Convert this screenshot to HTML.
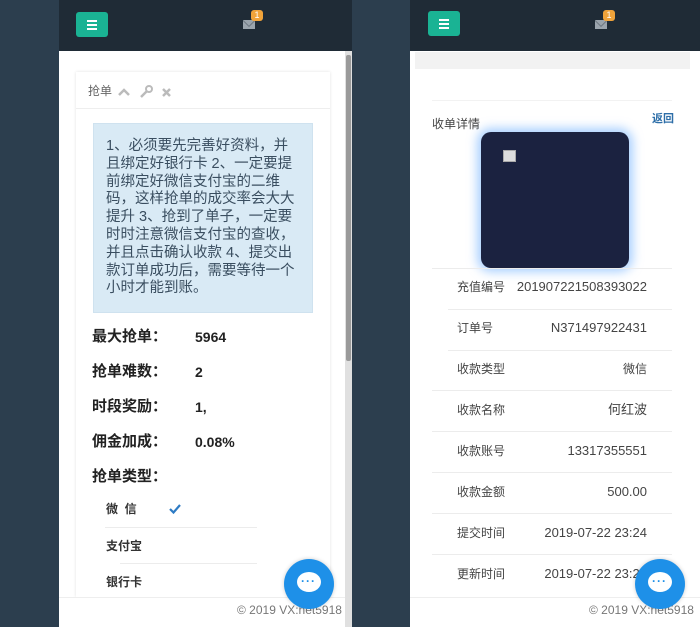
<!DOCTYPE html>
<html><head><meta charset="utf-8">
<style>
*{margin:0;padding:0;box-sizing:border-box}
body{width:700px;height:627px;background:#2c3e4e;position:relative;overflow:hidden;font-family:"Liberation Sans","Noto Sans CJK SC",sans-serif;}
.abs{position:absolute}
.top{background:#1f2b36;height:51px}
.menu{width:32px;height:25px;background:#1ab394;border-radius:3px;top:12px}
.menu i{position:absolute;left:11px;width:10px;height:2px;background:#fff}
.mail{width:12px;height:9px;background:#9aa4ad;top:20px;overflow:hidden}
.mail:after{content:"";position:absolute;left:1px;top:-5px;width:8px;height:8px;border:1px solid #6f7a84;transform:rotate(45deg)}
.badge{width:12px;height:11px;background:#f0a33a;border-radius:3px;color:#fff;font-size:9px;text-align:center;line-height:11px;top:10px}
.chat{width:50px;height:50px;border-radius:50%;background:#1e90e8;box-shadow:0 0 4px rgba(0,0,0,.2)}
.chat b{position:absolute;left:13px;top:13px;width:24px;height:20px;background:#fff;border-radius:50%}
.chat span{position:absolute;left:17px;top:15px;color:#1e90e8;font-size:12px;letter-spacing:1px;font-weight:bold}
.foot{font-size:12px;color:#777}
.lrow{font-size:15px;font-weight:bold;color:#222;line-height:18px}
.opt{font-size:12px;font-weight:bold;color:#333;line-height:16px}
.rl{font-size:12px;color:#444;line-height:16px}
.rv{font-size:13px;color:#444;text-align:right;width:200px;line-height:16px}
.sep{height:1px;background:#ececec}
</style></head><body>
<!-- left panel -->
<div class="abs" style="left:59px;top:0;width:293px;height:627px;background:#f3f3f4"></div>
<div class="abs top" style="left:59px;top:0;width:293px"></div>
<div class="abs menu" style="left:76px"><i style="top:8px"></i><i style="top:12px"></i><i style="top:16px"></i></div>
<div class="abs mail" style="left:243px"></div>
<div class="abs badge" style="left:251px">1</div>
<div class="abs" style="left:59px;top:51px;width:286px;height:546px;background:#fff"></div>
<div class="abs" style="left:345px;top:51px;width:7px;height:576px;background:#e0e0e0"></div>
<div class="abs" style="left:346px;top:55px;width:5px;height:306px;background:#9a9a9a;border-radius:2px"></div>
<div class="abs" style="left:76px;top:72px;width:254px;height:525px;background:#fff;box-shadow:0 0 3px rgba(0,0,0,.12)"></div>
<div class="abs" style="left:76px;top:108px;width:254px;height:1px;background:#eee"></div>
<div class="abs" style="left:88px;top:82px;font-size:12px;color:#666">抢单</div>
<svg class="abs" style="left:117px;top:87px" width="14" height="10"><path d="M2 8 L7 3 L12 8" stroke="#bbb" stroke-width="2.5" fill="none"/></svg>
<svg class="abs" style="left:139px;top:85px" width="14" height="14"><path d="M2 12 L8 6" stroke="#bbb" stroke-width="2.5"/><circle cx="10" cy="4" r="3" fill="none" stroke="#bbb" stroke-width="2"/></svg>
<svg class="abs" style="left:161px;top:87px" width="11" height="11"><path d="M2 2 L9 9 M9 2 L2 9" stroke="#bbb" stroke-width="2.5"/></svg>
<div class="abs" style="left:93px;top:123px;width:220px;height:190px;background:#d9eaf5;border:1px solid #cfe2ef"></div>
<div class="abs" style="left:106px;top:138px;white-space:nowrap;font-size:14.5px;line-height:17.8px;color:#3a4e60">1、必须要先完善好资料，并<br>且绑定好银行卡 2、一定要提<br>前绑定好微信支付宝的二维<br>码，这样抢单的成交率会大大<br>提升 3、抢到了单子，一定要<br>时时注意微信支付宝的查收，<br>并且点击确认收款 4、提交出<br>款订单成功后，需要等待一个<br>小时才能到账。</div>
<div class="abs lrow" style="left:92px;top:328px">最大抢单：</div><div class="abs lrow" style="left:195px;top:328px;font-size:14px">5964</div>
<div class="abs lrow" style="left:92px;top:363px">抢单难数：</div><div class="abs lrow" style="left:195px;top:363px;font-size:14px">2</div>
<div class="abs lrow" style="left:92px;top:398px">时段奖励：</div><div class="abs lrow" style="left:195px;top:398px;font-size:14px">1,</div>
<div class="abs lrow" style="left:92px;top:433px">佣金加成：</div><div class="abs lrow" style="left:195px;top:433px;font-size:14px">0.08%</div>
<div class="abs lrow" style="left:92px;top:468px">抢单类型：</div>
<div class="abs opt" style="left:106px;top:501px">微&nbsp;&nbsp;信</div>
<svg class="abs" style="left:168px;top:503px" width="14" height="12"><path d="M2 6 L5.5 9.5 L12 2" stroke="#2d7bc4" stroke-width="2.2" fill="none"/></svg>
<div class="abs sep" style="left:105px;top:527px;width:152px"></div>
<div class="abs opt" style="left:106px;top:538px">支付宝</div>
<div class="abs sep" style="left:120px;top:563px;width:137px"></div>
<div class="abs opt" style="left:106px;top:574px">银行卡</div>
<div class="abs" style="left:59px;top:597px;width:286px;height:30px;background:#fff;border-top:1px solid #eee"></div>
<div class="abs foot" style="left:237px;top:603px">© 2019 VX:net5918</div>
<div class="abs chat" style="left:284px;top:559px"><b></b><span>···</span></div>

<!-- right panel -->
<div class="abs" style="left:410px;top:0;width:290px;height:627px;background:#f3f3f4"></div>
<div class="abs top" style="left:410px;top:0;width:290px"></div>
<div class="abs menu" style="left:428px;top:11px"><i style="top:8px"></i><i style="top:12px"></i><i style="top:16px"></i></div>
<div class="abs mail" style="left:595px"></div>
<div class="abs badge" style="left:603px">1</div>
<div class="abs" style="left:410px;top:51px;width:290px;height:546px;background:#fff"></div>
<div class="abs" style="left:415px;top:52px;width:275px;height:17px;background:#f2f2f2"></div>
<div class="abs sep" style="left:432px;top:100px;width:240px;background:#f2f2f2"></div>
<div class="abs" style="left:432px;top:115px;font-size:12px;color:#444">收单详情</div>
<div class="abs" style="left:652px;top:110px;font-size:11px;color:#2d6ea8;font-weight:bold">返回</div>
<div class="abs" style="left:481px;top:132px;width:148px;height:136px;background:#1b2240;border-radius:10px;box-shadow:0 0 10px 4px rgba(100,170,255,.55)"></div>
<div class="abs" style="left:503px;top:150px;width:13px;height:12px;background:#ddd;border:1px solid #aaa"></div>
<div class="abs sep" style="left:432px;top:268px;width:240px"></div>
<div class="abs rl" style="left:457px;top:279px">充值编号</div><div class="abs rv" style="left:447px;top:279px">201907221508393022</div>
<div class="abs sep" style="left:448px;top:309px;width:224px"></div>
<div class="abs rl" style="left:457px;top:320px">订单号</div><div class="abs rv" style="left:447px;top:320px">N371497922431</div>
<div class="abs sep" style="left:448px;top:350px;width:224px"></div>
<div class="abs rl" style="left:457px;top:361px">收款类型</div><div class="abs rv" style="left:447px;top:361px;font-size:12px">微信</div>
<div class="abs sep" style="left:432px;top:390px;width:240px"></div>
<div class="abs rl" style="left:457px;top:402px">收款名称</div><div class="abs rv" style="left:447px;top:402px">何红波</div>
<div class="abs sep" style="left:432px;top:431px;width:240px"></div>
<div class="abs rl" style="left:457px;top:443px">收款账号</div><div class="abs rv" style="left:447px;top:443px">13317355551</div>
<div class="abs sep" style="left:432px;top:472px;width:240px"></div>
<div class="abs rl" style="left:457px;top:484px">收款金额</div><div class="abs rv" style="left:447px;top:484px">500.00</div>
<div class="abs sep" style="left:432px;top:513px;width:240px"></div>
<div class="abs rl" style="left:457px;top:525px">提交时间</div><div class="abs rv" style="left:447px;top:525px">2019-07-22 23:24</div>
<div class="abs sep" style="left:432px;top:554px;width:240px"></div>
<div class="abs rl" style="left:457px;top:566px">更新时间</div><div class="abs rv" style="left:447px;top:566px">2019-07-22 23:24</div>
<div class="abs" style="left:410px;top:597px;width:290px;height:30px;background:#fff;border-top:1px solid #eee"></div>
<div class="abs foot" style="left:589px;top:603px">© 2019 VX:net5918</div>
<div class="abs chat" style="left:635px;top:559px"><b></b><span>···</span></div>
</body></html>
